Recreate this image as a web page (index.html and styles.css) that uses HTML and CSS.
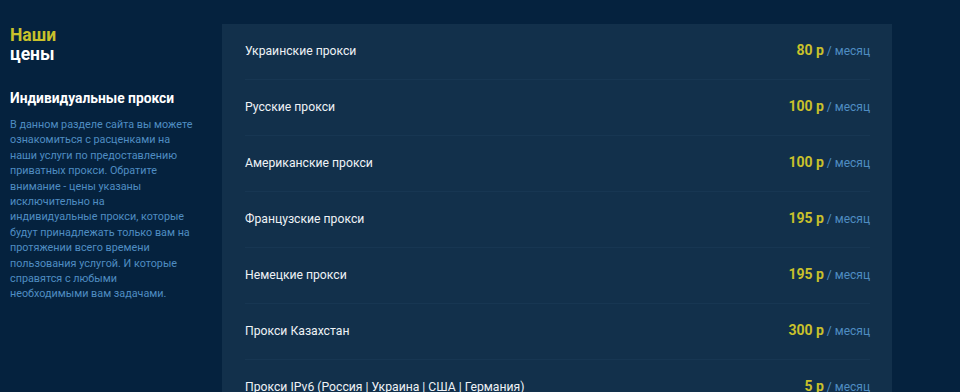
FILE: index.html
```html
<!DOCTYPE html>
<html lang="ru">
<head>
    <meta charset="UTF-8">
    <meta name="viewport" content="width=device-width, initial-scale=1.0">
    <title>Наши цены</title>
    <link rel="stylesheet" href="styles.css">
</head>
<body>
    <div class="prices">
        <div class="prices-info">
            <h2 class="prices-title"><span class="accent">Наши</span><br>цены</h2>
            <h3 class="prices-subtitle">Индивидуальные прокси</h3>
            <p class="prices-text">В данном разделе сайта вы можете ознакомиться с расценками на наши услуги по предоставлению приватных прокси. Обратите внимание - цены указаны исключительно на индивидуальные прокси, которые будут принадлежать только вам на протяжении всего времени пользования услугой. И которые справятся с любыми необходимыми вам задачами.</p>
        </div>
        <div class="price-list">
            <div class="price-row">
                <span class="price-name">Украинские прокси</span>
                <span class="price-value"><b>80 р</b> / месяц</span>
            </div>
            <div class="price-row">
                <span class="price-name">Русские прокси</span>
                <span class="price-value"><b>100 р</b> / месяц</span>
            </div>
            <div class="price-row">
                <span class="price-name">Американские прокси</span>
                <span class="price-value"><b>100 р</b> / месяц</span>
            </div>
            <div class="price-row">
                <span class="price-name">Французские прокси</span>
                <span class="price-value"><b>195 р</b> / месяц</span>
            </div>
            <div class="price-row">
                <span class="price-name">Немецкие прокси</span>
                <span class="price-value"><b>195 р</b> / месяц</span>
            </div>
            <div class="price-row">
                <span class="price-name">Прокси Казахстан</span>
                <span class="price-value"><b>300 р</b> / месяц</span>
            </div>
            <div class="price-row">
                <span class="price-name">Прокси IPv6 (Россия | Украина | США | Германия)</span>
                <span class="price-value"><b>5 р</b> / месяц</span>
            </div>
        </div>
    </div>
</body>
</html>
```

FILE: styles.css
```css
body {
    margin: 0;
    background-color: #05223e;
    font-family: Roboto, "Liberation Sans", Arial, sans-serif;
    color: #fff;
    overflow: hidden;
}
.prices {
    display: flex;
    padding-top: 24px;
}
.prices-info {
    width: 182.5px;
    padding: 0 29.5px 0 10px;
}
.prices-title {
    margin: 2px 0 0;
    font-size: 17.5px;
    line-height: 19px;
    font-weight: 700;
    color: #fff;
}
.accent {
    color: #c9c12b;
}
.prices-subtitle {
    margin: 26px 0 0;
    font-size: 13.8px;
    line-height: 16px;
    font-weight: 700;
}
.prices-text {
    margin: 11px 0 0;
    font-size: 10.8px;
    line-height: 15.4px;
    color: #4f8dc2;
}
.price-list {
    width: 670px;
    background-color: #12304b;
    padding: 0 22px 0 23px;
    box-sizing: border-box;
}
.price-row {
    display: flex;
    justify-content: space-between;
    align-items: baseline;
    height: 56px;
    box-sizing: border-box;
    padding-top: 18px;
    border-bottom: 1px solid #173652;
}
.price-name {
    font-size: 12.2px;
    line-height: 16px;
    color: #eef2f6;
}
.price-value {
    font-size: 12px;
    color: #4f8dc2;
}
.price-value b {
    font-size: 14px;
    color: #c9c12b;
}
```
